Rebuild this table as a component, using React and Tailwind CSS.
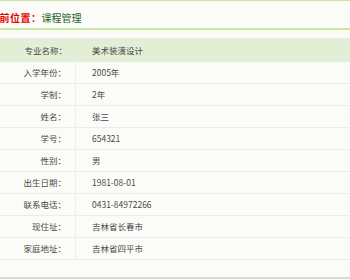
const rows = [
  ["入学年份：", "2005年"],
  ["学制：", "2年"],
  ["姓名：", "张三"],
  ["学号：", "654321"],
  ["性别：", "男"],
  ["出生日期：", "1981-08-01"],
  ["联系电话：", "0431-84972266"],
  ["现住址：", "吉林省长春市"],
  ["家庭地址：", "吉林省四平市"],
];

export default function App() {
  return (
    <div className="w-[350px] h-[280px] overflow-hidden bg-[#fbfcf8] font-['Noto_Sans_CJK_SC',sans-serif]">
      {/* 当前位置 */}
      <div className="h-[30px] border-t border-b-2 border-[#cbe6a4] flex items-center pt-[7px]">
        <span className="ml-[-11px] text-[10px] font-bold tracking-[0.5px] text-[#e60000] leading-none">
          当前位置：
        </span>
        <span className="text-[10px] text-[#1f5c2c] leading-none">课程管理</span>
      </div>

      <div className="mt-[8px] text-[8.5px] text-[#4a4a4a]">
        <div className="h-[24px] flex items-center bg-[#e3eed6]">
          <div className="w-[76px] text-right pr-[9px]">专业名称：</div>
          <div className="pl-[16px]">美术装潢设计</div>
        </div>
        {rows.map(([label, value]) => (
          <div key={label} className="h-[22px] flex border-b border-[#ececec]">
            <div className="w-[76px] flex items-center justify-end pr-[9px] border-r border-[#efefef]">
              {label}
            </div>
            <div className="flex items-center pl-[16px]">{value}</div>
          </div>
        ))}
      </div>

      <div className="mt-[17px] border-b-2 border-[#d8d8d8]" />
    </div>
  );
}
